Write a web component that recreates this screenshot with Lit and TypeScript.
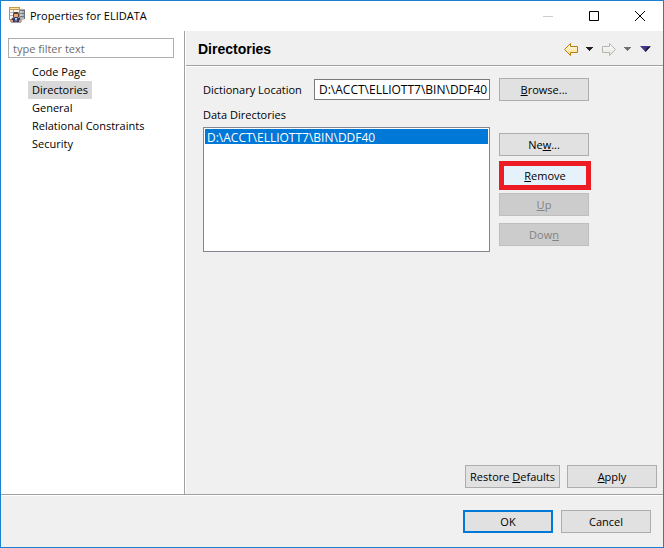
import { LitElement, html, css, svg } from "lit";
import { customElement, state } from "lit/decorators.js";
import { classMap } from "lit/directives/class-map.js";

const pages = ["Code Page", "Directories", "General", "Relational Constraints", "Security"];
const directory = "D:\\ACCT\\ELLIOTT7\\BIN\\DDF40";

const appIcon = html`<svg class="app-icon" width="16" height="16" viewBox="0 0 16 16" aria-hidden="true">
  <path d="M10 2.500Q13 1 16 2.500V12Q13 14 10 12z" fill="#b4b6b8" />
  <path d="M10 3Q13 4.500 16 3M10 6Q13 7.500 16 6M10 9Q13 10.500 16 9M15.500 3v9" fill="none" stroke="#6c6f73" />
  <path d="M11 5h2M11 8h2" stroke="#eceded" />
  <path d="M0 0h11v13H0z" fill="#96928c" />
  <path d="M1 3h9v9H1z" fill="#f5f4f2" />
  <path d="M0 0h11v3H0z" fill="#c79a4a" />
  <path d="M1 1h9v1H1z" fill="#ffe0a0" />
  <path d="M1 5.500h9M1 8.500h9M4.500 3v8" stroke="#b5b2ae" />
  <path d="M4 7l1-2h4l1 2v3H4z" fill="#5b4036" />
  <path d="M5 7h4v3l-2 1-2-1z" fill="#e9a678" />
  <path d="M2 15.500l1-4.500 3-1h2l3 1 1 4.500z" fill="#343a66" />
  <path d="M6 11h2l-1 4z" fill="#f1eef0" />
  <path d="M1 13h3v2H1zM10 13h3v2h-3z" fill="#d99b75" />
</svg>`;

const arrow = "M.5 6.500L6.500.5V3.500H13.500V9.500H6.500V12.500z";

@customElement("app-root")
export class AppRoot extends LitElement {
  @state() private page = "Directories";

  static styles = css`
    :host {
      display: block;
      font: 11px/18px "Open Sans", "Noto Sans", sans-serif;
      color: #000;
    }
    * { box-sizing: border-box; }
    button, input, select { font: inherit; color: inherit; margin: 0; border-radius: 0; }
    button { padding: 0; }
    svg { display: block; }
    u { text-decoration-skip-ink: none; text-underline-offset: 1px; }
    .window {
      display: flex;
      flex-direction: column;
      min-height: 100vh;
      border: 1px solid #1a80d2;
      background: #f0f0f0;
    }
    .titlebar { display: flex; height: 30px; background: #fff; }
    .app-icon { margin: 6px 5px 0 8px; flex: none; }
    .title { flex: 1; margin: 0; font-size: 11px; font-weight: 400; line-height: 30px; white-space: nowrap; }
    .caption {
      width: 46px;
      border: 0;
      background: none;
      display: grid;
      place-items: center;
    }
    .body { flex: 1; display: flex; }
    .sidebar { width: 184px; flex: none; background: #fff; border-right: 1px solid #a0a0a0; padding: 7px 10px 0 7px; }
    .filter { display: block; width: 100%; height: 20px; border: 1px solid #abadb3; padding: 0 4px; background: #fff; }
    .filter::placeholder { color: #6d6d6d; opacity: 1; }
    .tree { list-style: none; margin: 5px 0 0; padding: 0 0 0 20px; }
    .node { display: block; border: 0; background: none; height: 18px; padding: 0 4px; white-space: nowrap; }
    .node.current { background: #d9d9d9; }
    .main { flex: 1; min-width: 0; display: flex; flex-direction: column; border-left: 1px solid #fff; }
    .header {
      display: flex;
      align-items: center;
      height: 35px;
      border-bottom: 1px solid #a0a0a0;
      box-shadow: 0 1px #fff;
      padding: 2px 12px 0 12px;
    }
    .heading { flex: 1; margin: 0; font: bold 14px/18px "Liberation Sans", sans-serif; }
    .tools { display: flex; align-items: center; gap: 9px; }
    .pair { display: flex; align-items: center; gap: 8px; }
    .tool { border: 0; background: none; }
    .form { display: flex; flex-direction: column; margin: 12px 72px 0 17px; }
    .row { display: flex; align-items: center; gap: 8px; height: 23px; }
    .row label { min-width: 103px; }
    .location {
      flex: 1;
      min-width: 0;
      height: 21px;
      padding: 0 0 0 4px;
      border: 1px solid #7a7a7a;
      background: #fff;
      font-size: 12px;
    }
    .push {
      min-width: 90px;
      height: 23px;
      border: 1px solid #adadad;
      background: #e1e1e1;
      text-align: center;
      line-height: 20px;
      white-space: nowrap;
    }
    .push:disabled { background: #ccc; border-color: #bfbfbf; color: #838383; }
    .browse { margin: 0 2px 0 1px; }
    .list-label { margin: 5px 0 3px; }
    .columns { display: flex; gap: 9px; }
    .list {
      flex: 1;
      min-width: 0;
      height: 125px;
      border: 1px solid #828790;
      padding: 1px;
      background: #fff;
      font-size: 12px;
      overflow: hidden;
      outline: 0;
    }
    .list option { height: 15px; min-height: 15px; line-height: 14px; padding: 0 2px; }
    .list option:checked {
      color: #fff;
      -webkit-text-fill-color: #fff;
      background: #0078d7 linear-gradient(#0078d7, #0078d7);
    }
    .actions { display: flex; flex-direction: column; align-items: flex-start; width: 92px; padding-top: 6px; gap: 7px; }
    .remove { width: 92px; height: 29px; margin: -2px 0 -4px; border: 5px solid #ed1c24; background: #e5f1fb; line-height: 18px; }
    .page-actions { display: flex; justify-content: flex-end; gap: 7px; margin-top: auto; padding: 12px 6px 6px; }
    .restore { width: 95px; }
    .footer {
      display: flex;
      justify-content: flex-end;
      gap: 8px;
      border-top: 1px solid #a0a0a0;
      box-shadow: inset 0 1px #fff;
      padding: 15px 12px 14px;
    }
    .ok { border: 2px solid #0078d7; }
  `;

  private drop(color: string) {
    return html`<svg width="7" height="4" viewBox="0 0 7 4" shape-rendering="crispEdges" aria-hidden="true">
      <path d="M0 0h7v1H6v1H5v1H4v1H3V3H2V2H1V1H0z" fill=${color} />
    </svg>`;
  }

  private arrowIcon(back: boolean) {
    const id = back ? "back" : "forward";
    return html`<svg width="14" height="13" viewBox="0 0 14 13" aria-hidden="true">
      <defs>${svg`<linearGradient id=${id} x1="0" y1="0" x2="0" y2="1">
        <stop offset="0" stop-color=${back ? "#fffdf0" : "#ffffff"} />
        <stop offset="1" stop-color=${back ? "#fbdc80" : "#e2e2dc"} />
      </linearGradient>`}</defs>
      <path d=${arrow} transform=${back ? "" : "translate(14 0) scale(-1 1)"}
        fill="url(#${id})" stroke=${back ? "#b87c10" : "#b4b4b0"} />
    </svg>`;
  }

  render() {
    return html`
      <div class="window">
        <header class="titlebar">
          ${appIcon}
          <h1 class="title">Properties for ELIDATA</h1>
          <button class="caption" aria-label="Minimize" disabled>
            <svg width="10" height="10" viewBox="0 0 10 10"><path d="M0 5h10v1H0z" fill="#ccc" /></svg>
          </button>
          <button class="caption" aria-label="Maximize">
            <svg width="10" height="10" viewBox="0 0 10 10"><path d="M.5.5h9v9h-9z" fill="none" stroke="#000" /></svg>
          </button>
          <button class="caption" aria-label="Close">
            <svg width="10" height="10" viewBox="0 0 10 10"><path d="M0 0l10 10M10 0L0 10" stroke="#000" /></svg>
          </button>
        </header>
        <div class="body">
          <nav class="sidebar" aria-label="Property pages">
            <input class="filter" type="text" placeholder="type filter text" aria-label="Filter" />
            <ul class="tree">
              ${pages.map(
                (name) => html`<li>
                  <button class=${classMap({ node: true, current: name === this.page })}
                    @click=${() => (this.page = name)}>${name}</button>
                </li>`
              )}
            </ul>
          </nav>
          <main class="main">
            <div class="header">
              <h2 class="heading">Directories</h2>
              <div class="tools">
                <div class="pair">
                  <button class="tool" aria-label="Back">${this.arrowIcon(true)}</button>
                  <button class="tool" aria-label="Back history">${this.drop("#202020")}</button>
                </div>
                <div class="pair">
                  <button class="tool" aria-label="Forward" disabled>${this.arrowIcon(false)}</button>
                  <button class="tool" aria-label="Forward history" disabled>${this.drop("#707070")}</button>
                </div>
                <button class="tool" aria-label="Menu">
                  <svg width="11" height="6" viewBox="0 0 11 6" aria-hidden="true">
                    <path d="M0 0h11L5.500 6z" fill="#3f3787" />
                    <path d="M8 1h2L5.500 6V4z" fill="#17171c" />
                  </svg>
                </button>
              </div>
            </div>
            <div class="form">
              <div class="row">
                <label for="location">Dictionary Location</label>
                <input class="location" id="location" type="text" .value=${directory} />
                <button class="push browse"><u>B</u>rowse...</button>
              </div>
              <label class="list-label" for="directories">Data Directories</label>
              <div class="columns">
                <select class="list" id="directories" size="7">
                  <option selected>${directory}</option>
                </select>
                <div class="actions">
                  <button class="push">Ne<u>w</u>...</button>
                  <button class="push remove"><u>R</u>emove</button>
                  <button class="push" disabled><u>U</u>p</button>
                  <button class="push" disabled>Dow<u>n</u></button>
                </div>
              </div>
            </div>
            <div class="page-actions">
              <button class="push restore">Restore <u>D</u>efaults</button>
              <button class="push"><u>A</u>pply</button>
            </div>
          </main>
        </div>
        <footer class="footer">
          <button class="push ok">OK</button>
          <button class="push">Cancel</button>
        </footer>
      </div>
    `;
  }
}
